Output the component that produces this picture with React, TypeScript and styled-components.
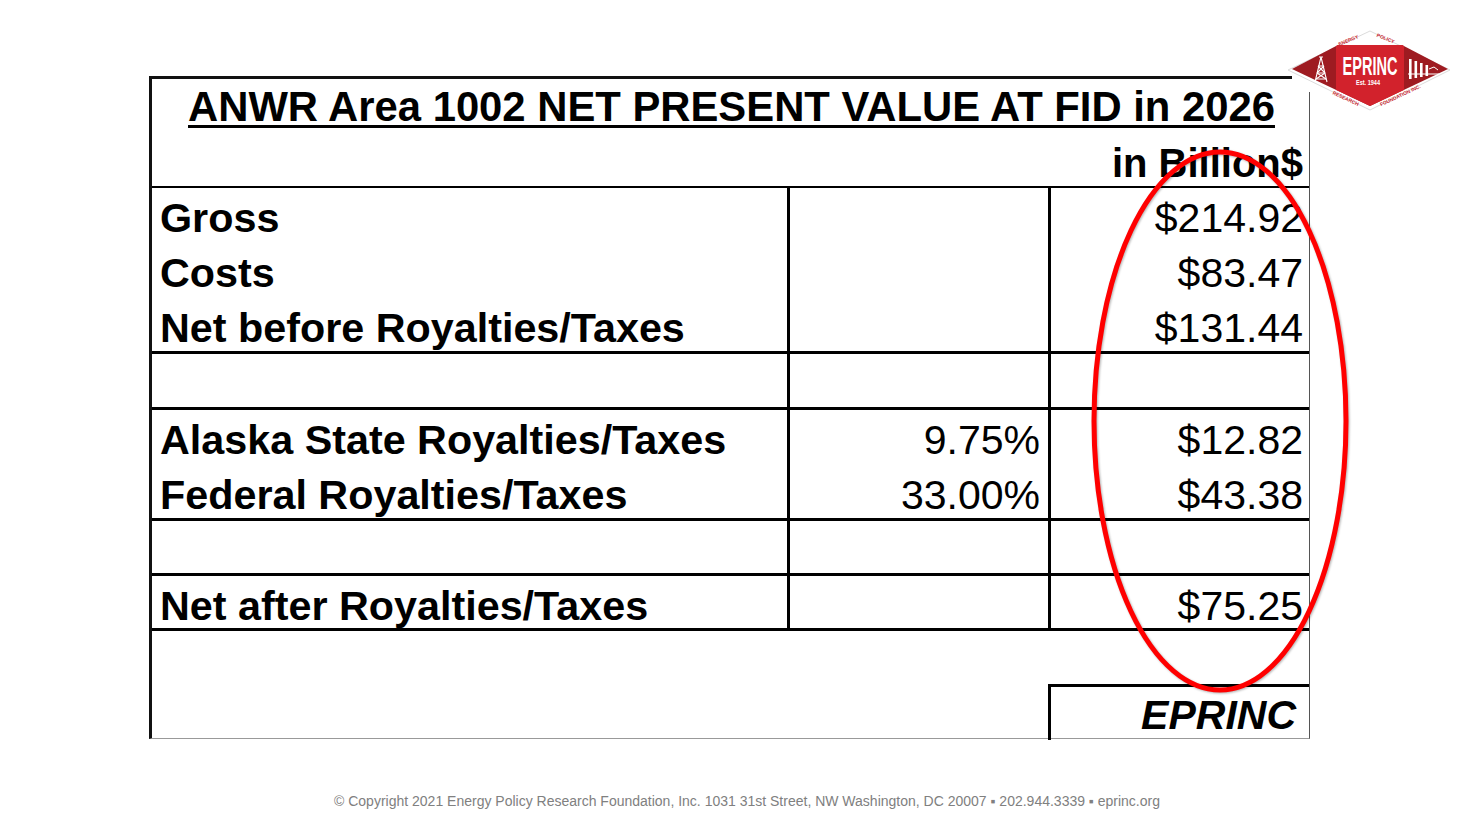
import styled, { createGlobalStyle } from 'styled-components';

const GlobalStyle = createGlobalStyle`
  html, body {
    margin: 0;
    padding: 0;
    background: #fff;
  }

  body {
    font-family: 'Liberation Sans', Arial, sans-serif;
    color: #000;
  }
`;

type Line = {
  label: string;
  rate?: string;
  value?: string;
  h: number;
  rule?: boolean;
};

const lines: Line[] = [
  { label: 'Gross', value: '$214.92', h: 55 },
  { label: 'Costs', value: '$83.47', h: 55 },
  { label: 'Net before Royalties/Taxes', value: '$131.44', h: 56, rule: true },
  { label: '', h: 56, rule: true },
  { label: 'Alaska State Royalties/Taxes', rate: '9.75%', value: '$12.82', h: 55 },
  { label: 'Federal Royalties/Taxes', rate: '33.00%', value: '$43.38', h: 56, rule: true },
  { label: '', h: 55, rule: true },
  { label: 'Net after Royalties/Taxes', value: '$75.25', h: 55, rule: true },
];

const Logo = () => (
  <LogoMark viewBox="0 0 166 84" width="166" height="84">
    <defs>
      <clipPath id="eprinc-shape">
        <polygon points="6,41 52,17 116,17 162,41 84,78" />
      </clipPath>
    </defs>
    <rect x="6" y="0" width="160" height="64" fill="#fff" />
    <polygon points="2,42 84,3 164,42 84,82" fill="#fff" stroke="#dcdcdc" strokeWidth="1" />
    <polygon points="6,41 52,17 116,17 162,41 84,78" fill="#9e1b21" />
    <rect x="50" y="0" width="68" height="84" fill="#d2222c" clipPath="url(#eprinc-shape)" />

    {/* derrick */}
    <g stroke="#fff" strokeWidth="1.1" fill="none">
      <path d="M35 29 L29 54 M35 29 L41 54 M33 29 H37" />
      <path d="M32 38 H38 M31 45 H39 M30 51 H40" />
      <path d="M32 38 L39 45 M38 38 L31 45 M31 45 L40 51 M39 45 L30 51" />
    </g>

    {/* fence / chart */}
    <g fill="#fff">
      <rect x="123" y="31" width="2.6" height="20" />
      <rect x="128.5" y="33" width="2.6" height="17" />
      <rect x="134" y="35" width="2.6" height="14" />
      <rect x="139.5" y="37" width="2.6" height="11" />
    </g>
    <path d="M122 46 H153 M143 41 L148 39 L152 42" stroke="#fff" strokeWidth="1" fill="none" />

    <text
      x="84"
      y="47"
      textAnchor="middle"
      fontFamily="'Liberation Sans', Arial, sans-serif"
      fontWeight="700"
      fontSize="25"
      textLength="55"
      lengthAdjust="spacingAndGlyphs"
      fill="#fff"
    >
      EPRINC
    </text>
    <text
      x="82"
      y="57"
      textAnchor="middle"
      fontFamily="'Liberation Sans', Arial, sans-serif"
      fontWeight="700"
      fontSize="6.5"
      textLength="24"
      lengthAdjust="spacingAndGlyphs"
      fill="#fff"
    >
      Est. 1944
    </text>

    <g fontFamily="'Liberation Sans', Arial, sans-serif" fontWeight="700" fontSize="5" fill="#c8262e" textAnchor="middle">
      <text transform="translate(63 14) rotate(-22)">ENERGY</text>
      <text transform="translate(99 12) rotate(22)">POLICY</text>
      <text transform="translate(59 72) rotate(25)">RESEARCH</text>
      <text transform="translate(115 69) rotate(-25)">FOUNDATION INC.</text>
    </g>
  </LogoMark>
);

const App = () => {
  return (
    <Page>
      <GlobalStyle />
      <Stage>
        <Sheet>
          <TitleRow>
            <Title>ANWR Area 1002 NET PRESENT VALUE AT FID in 2026</Title>
          </TitleRow>
          <UnitRow>in Billion$</UnitRow>

          {lines.map((line, i) => (
            <Row key={i} $h={line.h} $rule={line.rule}>
              <Label $divider>{line.label}</Label>
              <Amount $divider $pad={8}>
                {line.rate}
              </Amount>
              <Amount $pad={6}>{line.value}</Amount>
            </Row>
          ))}

          <Row $h={53} />
          <SignRow>
            <Label $divider />
            <Signature>EPRINC</Signature>
          </SignRow>
        </Sheet>

        <Circle viewBox="0 0 264 550" width="264" height="550">
          <ellipse cx="132" cy="275" rx="126" ry="269" fill="none" stroke="#ff0000" strokeWidth="5" />
        </Circle>

        <Logo />
      </Stage>

      <Footer>
        © Copyright 2021 Energy Policy Research Foundation, Inc. 1031 31st Street, NW Washington, DC 20007 ▪
        202.944.3339 ▪ eprinc.org
      </Footer>
    </Page>
  );
};

const Page = styled.main`
  width: 1470px;
  height: 824px;
  overflow: hidden;
`;

const Stage = styled.section`
  position: relative;
  padding: 76px 0 0 149px;
`;

const Sheet = styled.div`
  box-sizing: border-box;
  width: 1161px;
  border-left: 3px solid #111;
  border-top: 3px solid #111;
  border-right: 1px solid #555;
  border-bottom: 1px solid #999;
  font-size: 41px;
  line-height: 49px;
`;

const TitleRow = styled.div`
  box-sizing: border-box;
  height: 53px;
  padding: 3px 0 0 2px;
  text-align: center;
`;

const Title = styled.h1`
  margin: 0;
  font-size: 41.8px;
  font-weight: 700;
  line-height: 49px;
  text-decoration: underline;
  text-decoration-thickness: 3px;
  text-underline-offset: 4px;
`;

const UnitRow = styled.div`
  box-sizing: border-box;
  height: 56px;
  padding: 7px 6px 0 0;
  border-bottom: 2px solid #000;
  font-size: 40px;
  font-weight: 700;
  text-align: right;
`;

const Row = styled.div<{ $h: number; $rule?: boolean }>`
  box-sizing: border-box;
  display: grid;
  grid-template-columns: 638px 261px 258px;
  height: ${({ $h }) => $h}px;
  border-bottom: ${({ $rule }) => ($rule ? '3px solid #000' : 'none')};
`;

const Cell = styled.div<{ $divider?: boolean }>`
  box-sizing: border-box;
  padding-top: 6px;
  white-space: nowrap;
  border-right: ${({ $divider }) => ($divider ? '3px solid #000' : 'none')};
`;

const Label = styled(Cell)`
  padding-left: 8px;
  font-size: 41.3px;
  font-weight: 700;
`;

const Amount = styled(Cell)<{ $pad: number }>`
  padding-right: ${({ $pad }) => $pad}px;
  text-align: right;
  font-weight: 400;
`;

const SignRow = styled.div`
  box-sizing: border-box;
  display: grid;
  grid-template-columns: 899px 258px;
  height: 54px;
`;

const Signature = styled.div`
  box-sizing: border-box;
  padding: 4px 13px 0 0;
  border-top: 3px solid #000;
  font-weight: 700;
  font-style: italic;
  text-align: right;
`;

const Circle = styled.svg`
  position: absolute;
  left: 1088px;
  top: 146px;
  overflow: visible;
  filter: drop-shadow(1px 1px 1px rgba(0, 0, 0, 0.3));
  pointer-events: none;
`;

const LogoMark = styled.svg`
  position: absolute;
  left: 1286px;
  top: 28px;
`;

const Footer = styled.footer`
  margin-top: 54px;
  padding-left: 24px;
  font-size: 14px;
  line-height: 16px;
  color: #808080;
  text-align: center;
  white-space: nowrap;
`;

export default App;
